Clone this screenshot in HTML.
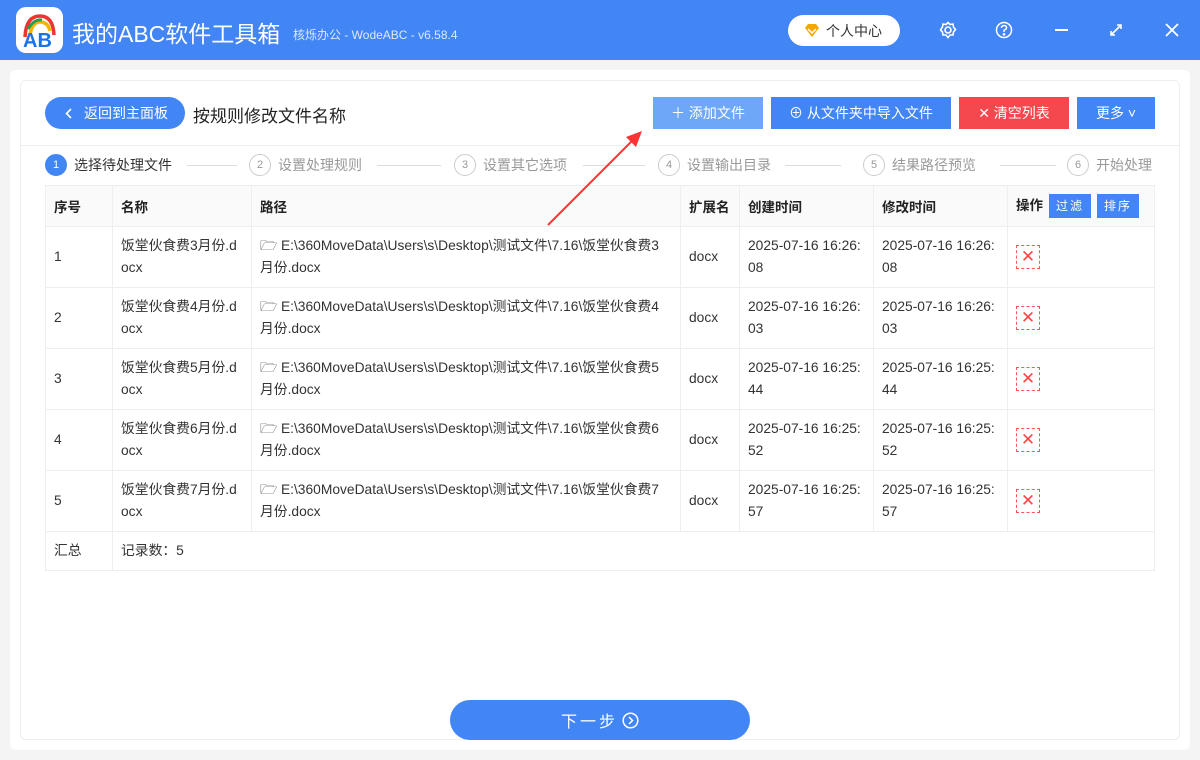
<!DOCTYPE html>
<html><head><meta charset="utf-8"><style>
*{box-sizing:border-box;margin:0;padding:0}
body{width:1200px;height:760px;background:#f4f4f4;font-family:"Liberation Sans","Noto Sans CJK SC",sans-serif;position:relative;overflow:hidden;color:#333}
.hdr{position:absolute;left:0;top:0;width:1200px;height:60px;background:#4286f5}
.logo{position:absolute;left:16px;top:7px;width:47px;height:46px;background:#fff;border-radius:10px}
.title{position:absolute;left:72px;top:15px;color:#fff;font-size:23px}
.sub{position:absolute;left:293px;top:26px;color:#dce8fd;font-size:12px}
.pc{position:absolute;left:788px;top:15px;width:112px;height:31px;background:#fff;border-radius:16px;font-size:14px;color:#333;padding:6px 0 0 38px}
.ic{position:absolute;color:#fff}
.panel{position:absolute;left:10px;top:70px;width:1180px;height:680px;background:#fff;border-radius:6px}
.card{position:absolute;left:20px;top:80px;width:1160px;height:660px;border:1px solid #eee;border-radius:6px}
.back{position:absolute;left:45px;top:97px;width:140px;height:32px;background:#4286f5;border-radius:16px;color:#fff;font-size:14px;line-height:32px;padding-left:39px}
.pt{position:absolute;left:193px;top:102px;font-size:17px;color:#222}
.btn{position:absolute;top:97px;height:32px;color:#fff;font-size:14px;text-align:center;line-height:32px}
.sep{position:absolute;left:21px;top:145px;width:1158px;height:1px;background:#eee}
.step{position:absolute;top:154px;font-size:14px;color:#999;line-height:22px}
.step i{display:inline-block;width:22px;height:22px;border:1px solid #ccc;border-radius:50%;font-style:normal;font-size:11px;text-align:center;line-height:20px;margin-right:7px;vertical-align:top}
.line{position:absolute;top:165px;height:1px;background:#ddd}
table{position:absolute;left:45px;top:185px;width:1110px;border-collapse:collapse;font-size:13.8px;table-layout:fixed}
td,th{border:1px solid #eee;padding:0 8px;text-align:left;vertical-align:middle;word-break:break-all}
th{height:41px;background:#fafafa;font-weight:bold;color:#222;font-size:13.5px}
td{height:61px;line-height:22px;color:#333}
.x{display:inline-block;width:24px;height:24px;border:1px dashed #f55;color:#f44;text-align:center;line-height:21px;font-size:17px}
.sb{display:inline-block;background:#4286f5;color:#fff;font-size:12px;padding:0 7px;height:24px;line-height:24px;margin-left:6px;font-weight:normal;letter-spacing:2px}
.next{position:absolute;left:450px;top:700px;width:300px;height:40px;background:#4286f5;border-radius:20px;color:#fff;font-size:16px;display:flex;align-items:center;justify-content:center;letter-spacing:3px}
</style></head><body>
<div class="hdr">
<div class="logo"><svg width="47" height="46"><path d="M9 30 Q10 9 24 9 Q37 9 38 28" fill="none" stroke="#e33" stroke-width="3.5"/><path d="M14 28 Q16 15 24 15 Q32 15 34 24" fill="none" stroke="#f5b400" stroke-width="3.5"/><path d="M12 22 Q18 12 26 13" fill="none" stroke="#2a9d4a" stroke-width="3"/><text x="7" y="40" font-size="20" font-weight="bold" fill="#1a73e8" font-family="Liberation Sans">AB</text></svg></div>
<div class="title">我的ABC软件工具箱</div>
<div class="sub">核烁办公 - WodeABC - v6.58.4</div>
<div class="pc"><svg style="position:absolute;left:16px;top:9px" width="16" height="14"><path d="M1 4 L4 0 H12 L15 4 L8 13Z" fill="#f5a800"/><path d="M4 5 L8 9 L12 5" stroke="#fff" stroke-width="1.5" fill="none"/></svg>个人中心</div>
<svg class="ic" style="left:939px;top:21px" width="18" height="18" fill="none" stroke="#fff" stroke-width="1.6"><circle cx="9" cy="9" r="3"/><path d="M9 1.5 L11 3.5 L14 3 L14.5 6 L16.5 8.5 L14.5 11 L14 14 L11 14 L9 16.5 L7 14 L4 14 L3.5 11 L1.5 9 L3.5 6 L4 3 L7 3.5Z"/></svg>
<svg class="ic" style="left:995px;top:21px" width="18" height="18" fill="none" stroke="#fff" stroke-width="1.5"><circle cx="9" cy="9" r="7.5"/><path d="M6.5 7 Q6.5 4.5 9 4.5 Q11.5 4.5 11.5 6.8 Q11.5 8.3 9 9.3 V11"/><circle cx="9" cy="13.3" r=".6" fill="#fff"/></svg>
<div class="ic" style="left:1055px;top:29px;width:13px;height:2px;background:#fff"></div>
<svg class="ic" style="left:1109px;top:23px" width="14" height="14" stroke="#fff" stroke-width="1.6" fill="none"><path d="M2 12 L12 2 M8 2 H12 V6 M2 8 V12 H6"/></svg>
<svg class="ic" style="left:1165px;top:23px" width="14" height="14" stroke="#fff" stroke-width="1.8"><path d="M1 1 L13 13 M13 1 L1 13"/></svg>
</div>
<div class="panel"></div>
<div class="card"></div>
<div class="back"><svg style="position:absolute;left:20px;top:11px" width="8" height="11" fill="none" stroke="#fff" stroke-width="1.6"><path d="M6 1 L1.5 5.5 L6 10"/></svg>返回到主面板</div>
<div class="pt">按规则修改文件名称</div>
<div class="btn" style="left:653px;width:110px;background:#6ea7f8">＋ 添加文件</div>
<div class="btn" style="left:771px;width:180px;background:#4286f5">⊕ 从文件夹中导入文件</div>
<div class="btn" style="left:959px;width:110px;background:#f5474e">✕ 清空列表</div>
<div class="btn" style="left:1077px;width:78px;background:#4286f5">更多 ˅</div>
<div class="sep"></div>
<div class="step" style="left:45px;color:#333"><i style="background:#4286f5;border-color:#4286f5;color:#fff">1</i>选择待处理文件</div>
<div class="line" style="left:187px;width:50px"></div>
<div class="step" style="left:249px"><i>2</i>设置处理规则</div>
<div class="line" style="left:377px;width:64px"></div>
<div class="step" style="left:454px"><i>3</i>设置其它选项</div>
<div class="line" style="left:583px;width:62px"></div>
<div class="step" style="left:658px"><i>4</i>设置输出目录</div>
<div class="line" style="left:785px;width:56px"></div>
<div class="step" style="left:863px"><i>5</i>结果路径预览</div>
<div class="line" style="left:1000px;width:56px"></div>
<div class="step" style="left:1067px"><i>6</i>开始处理</div>
<table>
<colgroup><col style="width:67px"><col style="width:139px"><col style="width:429px"><col style="width:59px"><col style="width:134px"><col style="width:134px"><col></colgroup>
<tr><th>序号</th><th>名称</th><th>路径</th><th>扩展名</th><th>创建时间</th><th>修改时间</th><th>操作<span class="sb">过滤</span><span class="sb">排序</span></th></tr>
<tr><td>1</td><td>饭堂伙食费3月份.docx</td><td>🗁 E:\360MoveData\Users\s\Desktop\测试文件\7.16\饭堂伙食费3月份.docx</td><td>docx</td><td>2025-07-16 16:26:08</td><td>2025-07-16 16:26:08</td><td><span class="x">✕</span></td></tr>
<tr><td>2</td><td>饭堂伙食费4月份.docx</td><td>🗁 E:\360MoveData\Users\s\Desktop\测试文件\7.16\饭堂伙食费4月份.docx</td><td>docx</td><td>2025-07-16 16:26:03</td><td>2025-07-16 16:26:03</td><td><span class="x">✕</span></td></tr>
<tr><td>3</td><td>饭堂伙食费5月份.docx</td><td>🗁 E:\360MoveData\Users\s\Desktop\测试文件\7.16\饭堂伙食费5月份.docx</td><td>docx</td><td>2025-07-16 16:25:44</td><td>2025-07-16 16:25:44</td><td><span class="x">✕</span></td></tr>
<tr><td>4</td><td>饭堂伙食费6月份.docx</td><td>🗁 E:\360MoveData\Users\s\Desktop\测试文件\7.16\饭堂伙食费6月份.docx</td><td>docx</td><td>2025-07-16 16:25:52</td><td>2025-07-16 16:25:52</td><td><span class="x">✕</span></td></tr>
<tr><td>5</td><td>饭堂伙食费7月份.docx</td><td>🗁 E:\360MoveData\Users\s\Desktop\测试文件\7.16\饭堂伙食费7月份.docx</td><td>docx</td><td>2025-07-16 16:25:57</td><td>2025-07-16 16:25:57</td><td><span class="x">✕</span></td></tr>
<tr><td style="height:39px">汇总</td><td colspan="6" style="height:39px">记录数：5</td></tr>
</table>
<svg style="position:absolute;left:540px;top:125px;z-index:5" width="110" height="110"><path d="M8 100 L96 12" stroke="#f33" stroke-width="2"/><path d="M102 6 L86 12 L96 22Z" fill="#f33"/></svg>
<div class="next">下一步 <svg width="17" height="17" fill="none" stroke="#fff" stroke-width="1.5" style="margin-left:4px"><circle cx="8.5" cy="8.5" r="7.3"/><path d="M7 5 L10.5 8.5 L7 12"/></svg></div>
</body></html>
